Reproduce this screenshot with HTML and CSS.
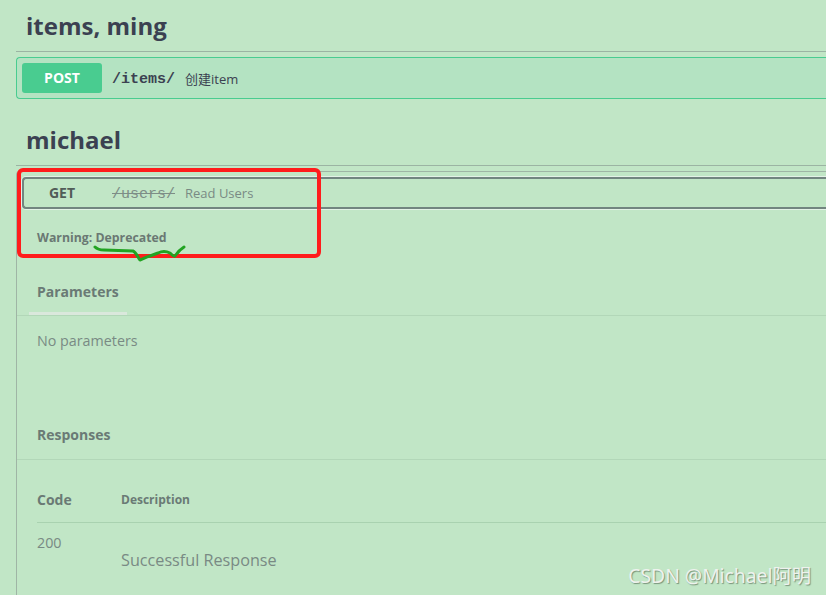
FILE: index.html
```html
<!DOCTYPE html>
<html lang="zh">
<head>
<meta charset="utf-8">
<title>Swagger UI</title>
<link rel="stylesheet" href="styles.css">
</head>
<body>
<div class="page">
  <section class="tag">
    <h3 class="tag-title">items, ming</h3>
    <div class="opblock opblock-post">
      <div class="summary">
        <span class="method method-post">POST</span>
        <span class="path">/items/</span>
        <span class="desc">创建item</span>
      </div>
    </div>
  </section>

  <section class="tag tag-last">
    <h3 class="tag-title">michael</h3>
    <div class="opblock opblock-deprecated">
      <div class="summary summary-focus">
        <span class="method method-get">GET</span>
        <span class="path path-deprecated">/users/</span>
        <span class="desc desc-muted">Read Users</span>
      </div>
      <div class="desc-wrapper">
        <h4 class="warning">Warning: Deprecated</h4>
      </div>
      <div class="section-header">
        <div class="tab">
          <h4 class="section-title">Parameters</h4>
          <div class="tab-bar"></div>
        </div>
      </div>
      <div class="params-body">
        <p class="muted-text">No parameters</p>
      </div>
      <div class="section-header responses-header">
        <h4 class="section-title">Responses</h4>
      </div>
      <div class="responses">
        <div class="resp-head">
          <span class="col-code head-code">Code</span>
          <span class="head-desc">Description</span>
        </div>
        <div class="resp-row">
          <span class="col-code muted-text">200</span>
          <span class="resp-desc">Successful Response</span>
        </div>
      </div>
    </div>
  </section>
</div>

<svg class="annotations" width="826" height="595" viewBox="0 0 826 595" aria-hidden="true">
  <rect x="19" y="170" width="300" height="86" rx="4" ry="4" fill="none" stroke="#ff1c1c" stroke-width="4"/>
  <path d="M95 247 C97 249 100 250 104 250 L133 251 C136 252 138 258 140 260 C143 259 146 257 150 256 L158 253 C162 251 166 251 170 253 C172 255 174 257 175 256 C177 253 179 250 184 247" fill="none" stroke="#22a322" stroke-width="3" stroke-linecap="round" stroke-linejoin="round"/>
</svg>

<div class="watermark">CSDN @Michael阿明</div>
</body>
</html>
```

FILE: styles.css
```css
html, body {
  margin: 0;
  padding: 0;
  overflow: hidden;
  background: #c1e6c6;
}

body {
  width: 826px;
  height: 595px;
  position: relative;
  font-family: "Open Sans", "Noto Sans CJK SC", sans-serif;
  color: #3b4151;
}

.page {
  height: 595px;
  padding-left: 16px;
  display: flex;
  flex-direction: column;
  box-sizing: border-box;
}

.tag-last {
  flex: 1;
  display: flex;
  flex-direction: column;
  min-height: 0;
}

.tag-title {
  margin: 0;
  padding: 11px 10px 10px 10px;
  font-size: 24px;
  line-height: 30px;
  font-weight: 700;
  color: #3b4151;
  border-bottom: 1px solid #9bb4a3;
}

.opblock {
  margin: 5px 0 15px 0;
  border: 1px solid #49cc90;
  border-right: none;
  border-radius: 4px 0 0 4px;
  padding: 5px;
}

.opblock-post {
  background: #b4e3c2;
}

.summary {
  display: flex;
  align-items: center;
}

.method {
  width: 80px;
  height: 30px;
  line-height: 30px;
  text-align: center;
  font-size: 14px;
  font-weight: 700;
  border-radius: 3px;
  margin-right: 10px;
}

.method-post {
  background: #49cc90;
  color: #ffffff;
}

.path {
  font-family: "Liberation Mono", "DejaVu Sans Mono", monospace;
  font-size: 15px;
  font-weight: 700;
  color: #3b4151;
  margin-right: 10px;
  margin-top: 3px;
}

.desc {
  font-size: 13px;
  color: #3b4151;
  font-family: "Open Sans", "Noto Sans CJK SC", sans-serif;
}

.opblock-deprecated {
  flex: 1;
  border-color: #9fb5a5;
  border-bottom: none;
  border-radius: 4px 0 0 0;
  padding: 5px 0 0 0;
  margin-bottom: 0;
  overflow: hidden;
}

.summary-focus {
  margin-left: 5px;
  height: 28px;
  border: 2px solid #728580;
  border-right: none;
  border-radius: 4px 0 0 4px;
  box-shadow: 0 0 0 1px #e3f2e6;
}

.method-get {
  width: 76px;
  height: 28px;
  line-height: 28px;
  margin-right: 12px;
  color: #515c58;
  background: transparent;
}

.path-deprecated {
  color: #7d8d87;
  text-decoration: line-through;
  font-weight: 400;
}

.desc-muted {
  color: #798a84;
}

.desc-wrapper {
  padding: 21px 20px 19px 20px;
}

.warning {
  margin: 0;
  font-size: 12.3px;
  line-height: 16px;
  font-weight: 700;
  color: #6a7873;
}

.section-header {
  padding: 15px 20px 0 20px;
  border-bottom: 1px solid #b2d7b8;
}

.tab {
  display: inline-block;
}

.section-title {
  margin: 0;
  font-size: 14px;
  line-height: 20px;
  font-weight: 700;
  color: #6a7a75;
}

.tab-bar {
  margin: 10px -8px 0 -8px;
  height: 3px;
  background: #dae8dc;
}

.params-body {
  padding: 15px 20px 59px 20px;
}

.muted-text {
  margin: 0;
  font-size: 14.3px;
  line-height: 20px;
  color: #798a84;
}

.responses-header {
  padding-bottom: 14px;
}

.responses {
  padding: 0 0 0 20px;
}

.resp-head {
  display: flex;
  align-items: center;
  padding: 30px 0 12px 0;
  border-bottom: 1px solid #a9d2b0;
}

.col-code {
  width: 84px;
  flex: none;
}

.head-code {
  font-size: 14px;
  line-height: 20px;
  font-weight: 700;
  color: #6a7a75;
}

.head-desc {
  font-size: 12px;
  line-height: 20px;
  font-weight: 700;
  color: #6a7a75;
}

.resp-row {
  display: flex;
  align-items: flex-start;
  padding-top: 10px;
}

.resp-desc {
  padding-top: 16px;
  font-size: 16.2px;
  line-height: 22px;
  color: #798a84;
}

.annotations {
  position: absolute;
  left: 0;
  top: 0;
  pointer-events: none;
}

.watermark {
  position: absolute;
  right: 15px;
  bottom: 8px;
  font-family: "Noto Sans", "Noto Sans CJK SC", sans-serif;
  font-size: 19.3px;
  line-height: 22px;
  color: #eef2ee;
  text-shadow: 1px 1px 1px rgba(60, 80, 60, 0.55);
  white-space: nowrap;
}
```
